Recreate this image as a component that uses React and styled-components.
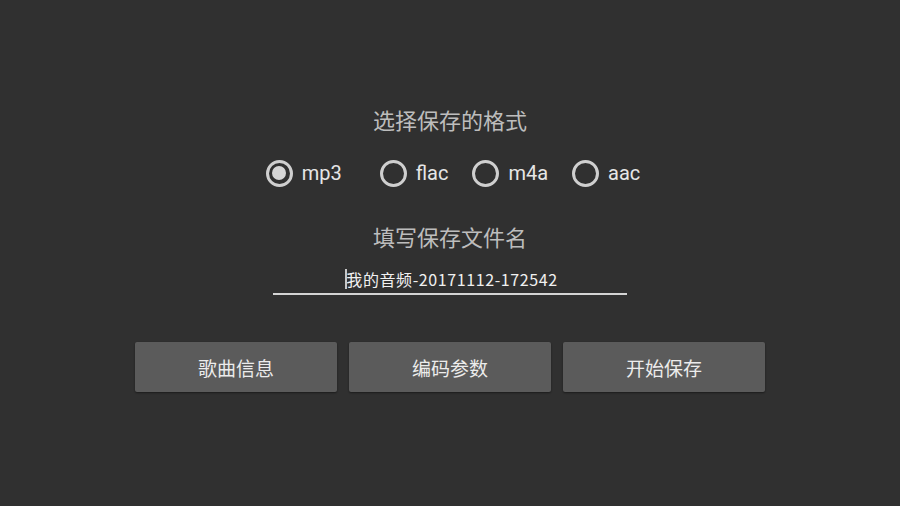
import React, { useState } from "react";
import styled, { createGlobalStyle } from "styled-components";

const Global = createGlobalStyle`
  html, body { margin: 0; padding: 0; background: #303030; }
  body { font-family: Roboto, "Noto Sans CJK SC", sans-serif; }
`;

const Page = styled.div`
  width: 900px;
  height: 506px;
  background: #303030;
  display: flex;
  flex-direction: column;
  align-items: center;
  padding-top: 108px;
  box-sizing: border-box;
`;

const Caption = styled.div`
  font-family: Roboto, "Noto Sans CJK SC", sans-serif;
  font-size: 22px;
  line-height: 27px;
  color: #bdbdbd;
  margin-top: ${(p) => p.$top || 0}px;
`;

const RadioRow = styled.div`
  display: flex;
  align-items: center;
  height: 30px;
  margin-top: 23px;
  margin-left: 6px;
`;

const RadioItem = styled.label`
  display: flex;
  align-items: center;
  gap: 9px;
  margin-right: ${(p) => p.$after}px;
  cursor: pointer;
`;

const Circle = styled.span`
  width: 27px;
  height: 27px;
  box-sizing: border-box;
  border-radius: 50%;
  border: 3px solid #cfcfcf;
  display: flex;
  align-items: center;
  justify-content: center;
  &::after {
    content: "";
    width: 14px;
    height: 14px;
    border-radius: 50%;
    background: #d6d6d6;
    display: ${(p) => (p.$on ? "block" : "none")};
  }
`;

const RadioLabel = styled.span`
  font-family: Roboto, sans-serif;
  font-size: 20px;
  color: #e6e6e6;
`;

const Field = styled.div`
  margin-top: 14px;
  width: 354px;
  border-bottom: 2px solid #d4d4d4;
  display: flex;
  justify-content: center;
  padding-bottom: 1px;
`;

const FieldText = styled.div`
  font-family: "Noto Sans CJK SC", sans-serif;
  font-size: 16px;
  line-height: 26px;
  letter-spacing: 0.6px;
  color: #f0f0f0;
  position: relative;
  margin-left: 4px;
  &::before {
    content: "";
    position: absolute;
    left: -1px;
    top: 3px;
    width: 2px;
    height: 20px;
    background: #c8c8c8;
  }
`;

const ButtonRow = styled.div`
  display: flex;
  gap: 12px;
  margin-top: 47px;
`;

const Button = styled.button`
  width: 202px;
  height: 50px;
  border: none;
  border-radius: 2px;
  background: #5b5b5b;
  box-shadow: 0 1px 2px rgba(0, 0, 0, 0.45);
  color: #ececec;
  font-family: "Noto Sans CJK SC", sans-serif;
  font-size: 19px;
  line-height: 24px;
  display: flex;
  align-items: center;
  justify-content: center;
  padding: 2px 0 0;
`;

const formats = [
  { name: "mp3", after: 38 },
  { name: "flac", after: 24 },
  { name: "m4a", after: 24 },
  { name: "aac", after: 0 },
];

export default function App() {
  const [sel, setSel] = useState("mp3");
  return (
    <>
      <Global />
      <Page>
        <Caption>选择保存的格式</Caption>
        <RadioRow>
          {formats.map((f) => (
            <RadioItem key={f.name} $after={f.after} onClick={() => setSel(f.name)}>
              <Circle $on={sel === f.name} />
              <RadioLabel>{f.name}</RadioLabel>
            </RadioItem>
          ))}
        </RadioRow>
        <Caption $top={37}>填写保存文件名</Caption>
        <Field>
          <FieldText>我的音频-20171112-172542</FieldText>
        </Field>
        <ButtonRow>
          <Button>歌曲信息</Button>
          <Button>编码参数</Button>
          <Button>开始保存</Button>
        </ButtonRow>
      </Page>
    </>
  );
}
